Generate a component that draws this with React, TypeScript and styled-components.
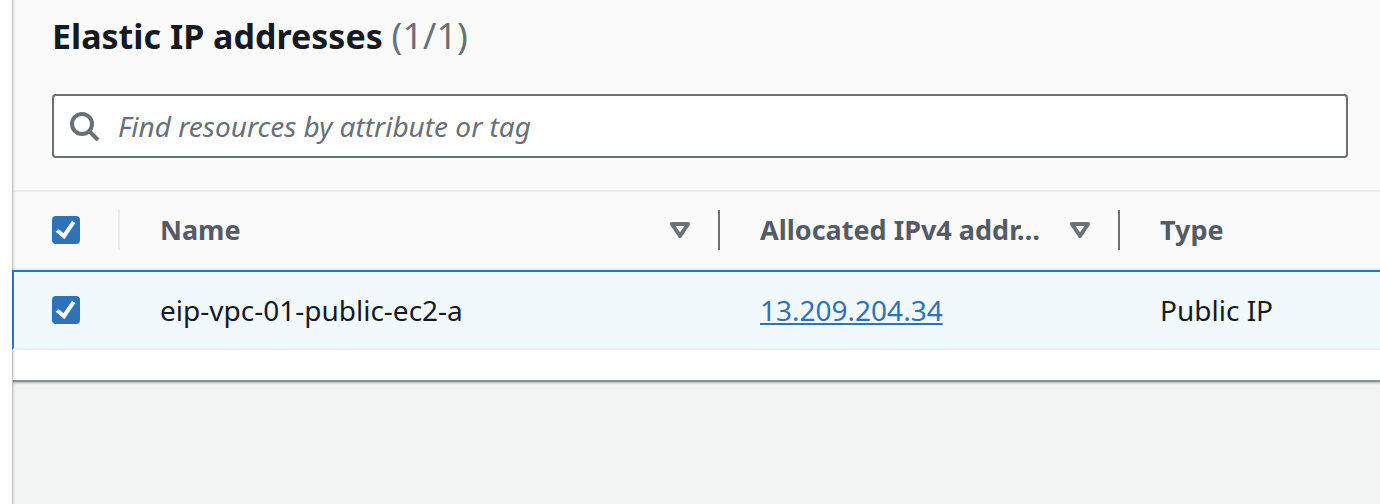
import React, { useState } from 'react';
import styled, { createGlobalStyle } from 'styled-components';

const colors = {
  text: '#16191f',
  heading: '#545b64',
  muted: '#687078',
  line: '#eaeded',
  blue: '#2e73b8',
  header: '#fafafa',
  selected: '#f1f9fd',
  page: '#f2f3f3',
};

const GlobalStyle = createGlobalStyle`
  *, *::before, *::after { box-sizing: border-box; }
  body {
    margin: 0;
    background: #ffffff;
    color: ${colors.text};
    font-family: 'Noto Sans', 'Open Sans', sans-serif;
    font-size: 28px;
    line-height: 40px;
  }
`;

const Main = styled.main`
  position: relative;
  min-height: 100vh;
  margin-left: 12px;
  overflow: hidden;
  background: ${colors.page};

  &::before {
    content: '';
    position: absolute;
    z-index: 1;
    inset: 0 auto 0 0;
    width: 3px;
    border-left: 1px solid #bdc2c6;
    background: linear-gradient(90deg, rgba(0, 28, 36, 0.1), rgba(0, 28, 36, 0.03));
  }
`;

const Panel = styled.section`
  padding-bottom: 30px;
  background: #ffffff;
  border-bottom: 2px solid #879196;
  box-shadow: 0 1px 2px rgba(0, 28, 36, 0.3);
`;

const PanelHeader = styled.header`
  padding: 16px 32px 32px 40px;
  background: ${colors.header};
  border-bottom: 2px solid ${colors.line};
`;

const Title = styled.h2`
  margin: 0 0 38px;
  font-size: 34px;
  line-height: 40px;
  font-weight: 700;
`;

const Count = styled.span`
  font-size: 36px;
  font-weight: 400;
  color: ${colors.muted};
`;

const SearchBox = styled.label`
  display: flex;
  align-items: center;
  gap: 18px;
  height: 64px;
  padding: 0 16px;
  background: #ffffff;
  border: 2px solid ${colors.muted};
  border-radius: 4px;
`;

const SearchIcon = styled.svg`
  flex: none;
  width: 30px;
  height: 30px;
  fill: none;
  stroke: ${colors.muted};
  stroke-width: 4;
`;

const SearchInput = styled.input`
  flex: 1;
  min-width: 0;
  padding: 0;
  border: 0;
  outline: 0;
  background: transparent;
  color: ${colors.text};
  font: inherit;

  &::placeholder {
    color: ${colors.muted};
    font-style: italic;
    opacity: 1;
  }
`;

const Table = styled.table`
  width: 100%;
  table-layout: fixed;
  border-collapse: separate;
  border-spacing: 0;
  text-align: left;
`;

const Column = styled.col<{ $width?: number }>`
  width: ${({ $width }) => ($width ? `${$width}px` : 'auto')};
`;

const HeaderCell = styled.th`
  height: 78px;
  padding: 0 0 0 40px;
  background: ${colors.header};
  border-bottom: 2px solid ${colors.line};
  color: ${colors.heading};
  font-size: 27px;
  font-weight: 700;
`;

const HeaderContent = styled.div`
  display: flex;
  align-items: center;
  justify-content: space-between;
`;

const HeaderLabel = styled.span`
  flex: 1;
  overflow: hidden;
  white-space: nowrap;
`;

const ColumnDivider = styled.span<{ $light?: boolean }>`
  width: 2px;
  height: 40px;
  background: ${({ $light }) => ($light ? colors.line : colors.muted)};
`;

const SortButton = styled.button`
  display: flex;
  margin-right: 28px;
  padding: 0;
  border: 0;
  background: transparent;
  cursor: pointer;
`;

const SortIcon = styled.svg`
  width: 20px;
  height: 16px;
  fill: none;
  stroke: ${colors.muted};
  stroke-width: 4;
  stroke-linejoin: round;
`;

const SelectedRow = styled.tr`
  position: relative;
  z-index: 2;
`;

const Cell = styled.td`
  height: 80px;
  padding: 0 0 0 40px;
  background: ${colors.selected};
  border-top: 2px solid ${colors.blue};
  border-bottom: 2px solid ${colors.line};
  white-space: nowrap;
`;

const SelectCell = styled(Cell)`
  padding-left: 38px;
  border-left: 2px solid ${colors.blue};
`;

const Link = styled.a`
  color: ${colors.blue};
  text-decoration: underline;
  text-decoration-thickness: 2px;
  text-underline-offset: 2px;
  text-decoration-skip-ink: none;
`;

const CheckLabel = styled.label`
  display: grid;
  width: fit-content;

  > * { grid-area: 1 / 1; }
`;

const CheckInput = styled.input`
  appearance: none;
  width: 28px;
  height: 28px;
  margin: 0;
  background: #ffffff;
  border: 2px solid ${colors.muted};
  border-radius: 4px;

  &:checked {
    background: ${colors.blue};
    border-color: ${colors.blue};
  }
`;

const CheckMark = styled.svg`
  width: 28px;
  height: 28px;
  fill: none;
  stroke: #ffffff;
  stroke-width: 4;
  pointer-events: none;
`;

function Checkbox({ label }: { label: string }) {
  const [checked, setChecked] = useState(true);
  return (
    <CheckLabel>
      <CheckInput
        type="checkbox"
        aria-label={label}
        checked={checked}
        onChange={(event) => setChecked(event.target.checked)}
      />
      {checked && (
        <CheckMark viewBox="0 0 28 28" aria-hidden="true">
          <path d="M5 14.2 12 20.2 21.7 5.8" />
        </CheckMark>
      )}
    </CheckLabel>
  );
}

function SortableHeader({ label }: { label: string }) {
  return (
    <HeaderCell scope="col">
      <HeaderContent>
        <HeaderLabel>{label}</HeaderLabel>
        <SortButton type="button" aria-label={`Sort by ${label}`}>
          <SortIcon viewBox="0 0 20 16" aria-hidden="true">
            <path d="M2 2H18L10 14Z" />
          </SortIcon>
        </SortButton>
        <ColumnDivider />
      </HeaderContent>
    </HeaderCell>
  );
}

export default function App() {
  const [query, setQuery] = useState('');

  return (
    <>
      <GlobalStyle />
      <Main>
        <Panel>
          <PanelHeader>
            <Title>
              Elastic IP addresses <Count>(1/1)</Count>
            </Title>
            <SearchBox>
              <SearchIcon viewBox="0 0 30 30" aria-hidden="true">
                <circle cx="12" cy="13" r="10" />
                <path d="M19 20 28 29" />
              </SearchIcon>
              <SearchInput
                type="text"
                aria-label="Find resources"
                placeholder="Find resources by attribute or tag"
                value={query}
                onChange={(event) => setQuery(event.target.value)}
              />
            </SearchBox>
          </PanelHeader>
          <Table>
            <colgroup>
              <Column $width={108} />
              <Column $width={600} />
              <Column $width={400} />
              <Column />
            </colgroup>
            <thead>
              <tr>
                <HeaderCell scope="col">
                  <HeaderContent>
                    <Checkbox label="Select all" />
                    <ColumnDivider $light />
                  </HeaderContent>
                </HeaderCell>
                <SortableHeader label="Name" />
                <SortableHeader label="Allocated IPv4 addr…" />
                <HeaderCell scope="col">Type</HeaderCell>
              </tr>
            </thead>
            <tbody>
              <SelectedRow>
                <SelectCell>
                  <Checkbox label="Select eip-vpc-01-public-ec2-a" />
                </SelectCell>
                <Cell>eip-vpc-01-public-ec2-a</Cell>
                <Cell>
                  <Link href="#13.209.204.34">13.209.204.34</Link>
                </Cell>
                <Cell>Public IP</Cell>
              </SelectedRow>
            </tbody>
          </Table>
        </Panel>
      </Main>
    </>
  );
}
